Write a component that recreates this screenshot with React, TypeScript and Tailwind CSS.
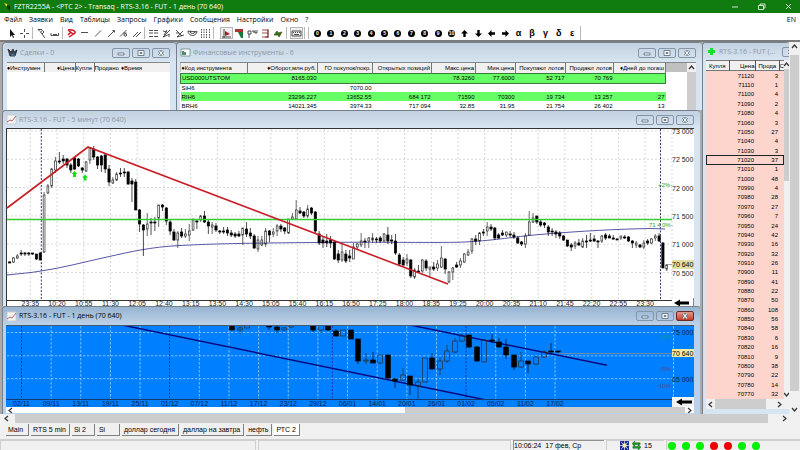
import type { ReactNode } from 'react';
import clsx from 'clsx';

type Candle = [high: number, low: number, top: number, bottom: number, filled?: 1];

const menus = ['Файл', 'Заявки', 'Вид', 'Таблицы', 'Запросы', 'Графики', 'Сообщения', 'Настройки', 'Окно', '?'];

const minuteTimes = [
  '23:35', '10:20', '10:55', '11:30', '12:05', '12:40', '13:15', '13:50', '14:30', '15:05', '15:40', '16:15',
  '16:50', '17:25', '18:00', '18:35', '19:25', '20:00', '20:35', '21:10', '21:45', '22:20', '22:55', '23:30',
];

const minutePrices = ['73 000', '72 500', '72 000', '71 500', '71 000', '70 500'];

const minuteCandles: Candle[] = [
  [261, 263, 262, 263, 1], [257, 263, 258, 262], [254, 259, 256, 258], [250, 256, 253, 254, 1], [252, 256, 253, 254, 1],
  [252, 256, 253, 254, 1], [253, 255, 253, 254, 1], [254, 260, 254, 259, 1], [252, 260, 253, 260, 1], [192, 253, 195, 252],
  [184, 194, 186, 193], [168, 188, 169, 186], [157, 173, 161, 170], [152, 164, 161, 162, 1], [155, 164, 159, 161, 1],
  [158, 168, 159, 165, 1], [163, 173, 165, 170, 1], [157, 170, 158, 169, 1], [158, 167, 159, 166, 1], [167, 173, 168, 170, 1],
  [161, 172, 162, 171], [147, 164, 148, 160], [146, 160, 149, 157, 1], [156, 169, 157, 165, 1], [155, 172, 156, 165, 1],
  [154, 173, 155, 169, 1], [165, 186, 169, 182, 1], [177, 184, 180, 183], [172, 181, 174, 180], [168, 177, 173, 174, 1],
  [168, 177, 172, 173, 1], [171, 185, 172, 184, 1], [178, 202, 181, 184, 1], [179, 210, 182, 210, 1], [209, 232, 210, 224, 1],
  [224, 256, 225, 230, 1], [213, 236, 224, 229], [218, 235, 222, 223, 1], [217, 231, 222, 223, 1], [205, 227, 205, 218],
  [204, 211, 205, 207, 1], [207, 225, 208, 221, 1], [220, 235, 222, 231, 1], [229, 241, 232, 240, 1], [231, 248, 233, 240],
  [228, 238, 232, 236, 1], [229, 238, 234, 236], [224, 241, 231, 235], [218, 231, 220, 230], [219, 229, 221, 222, 1],
  [215, 222, 216, 220], [211, 223, 216, 222, 1], [219, 234, 222, 226, 1], [222, 234, 225, 227], [223, 232, 226, 230, 1],
  [230, 234, 231, 232, 1], [227, 234, 231, 232, 1], [227, 236, 230, 233, 1], [230, 237, 233, 235, 1], [232, 238, 234, 236, 1],
  [231, 237, 234, 236, 1], [228, 245, 228, 235], [222, 237, 229, 234, 1], [228, 239, 233, 236, 1], [234, 249, 236, 248, 1],
  [236, 252, 240, 249], [236, 246, 240, 245], [228, 247, 231, 244], [230, 242, 231, 235, 1], [228, 237, 232, 234],
  [224, 236, 226, 231], [224, 232, 226, 229, 1], [227, 234, 228, 231, 1], [219, 234, 219, 233], [213, 220, 217, 219],
  [200, 219, 210, 219], [207, 214, 211, 213, 1], [211, 218, 212, 216, 1], [205, 218, 209, 216], [207, 215, 208, 213, 1],
  [211, 234, 212, 231, 1], [231, 245, 234, 243, 1], [236, 248, 240, 243, 1], [234, 247, 241, 243, 1], [236, 248, 240, 243, 1],
  [240, 260, 242, 259, 1], [250, 263, 254, 260, 1], [243, 262, 252, 260], [250, 263, 254, 261, 1], [250, 262, 256, 258, 1],
  [243, 259, 247, 259], [243, 249, 244, 247], [233, 247, 241, 245], [238, 248, 241, 242, 1], [237, 248, 238, 241],
  [233, 243, 238, 240], [237, 243, 239, 240, 1], [236, 243, 238, 241, 1], [233, 242, 234, 241], [227, 244, 235, 241, 1],
  [235, 244, 240, 241, 1], [234, 255, 241, 253, 1], [253, 266, 255, 264, 1], [257, 266, 260, 265, 1], [254, 266, 259, 263],
  [259, 278, 260, 276, 1], [268, 279, 270, 277], [265, 273, 271, 272, 1], [259, 273, 260, 271], [259, 271, 261, 268, 1],
  [267, 277, 267, 269], [262, 271, 267, 269, 1], [260, 271, 264, 268], [246, 268, 258, 267], [258, 274, 259, 269, 1],
  [271, 283, 272, 282], [267, 280, 268, 272], [262, 268, 265, 267, 1], [258, 268, 261, 265], [253, 263, 254, 262],
  [249, 256, 252, 255], [238, 254, 239, 251], [235, 245, 239, 241, 1], [232, 245, 233, 241], [229, 236, 232, 233, 1],
  [222, 236, 227, 231], [224, 231, 227, 229, 1], [227, 240, 228, 238, 1], [233, 239, 235, 238, 1], [230, 236, 233, 235, 1],
  [232, 237, 232, 235], [231, 237, 234, 235, 1], [232, 239, 235, 237, 1], [236, 244, 238, 243, 1], [241, 246, 242, 244, 1],
  [233, 248, 236, 244], [211, 236, 222, 235], [213, 223, 218, 222], [216, 224, 216, 222, 1], [219, 227, 222, 225, 1],
  [222, 228, 223, 225, 1], [225, 236, 227, 232, 1], [228, 236, 231, 232, 1], [230, 238, 232, 234, 1], [231, 239, 233, 236, 1],
  [235, 241, 236, 240, 1], [240, 247, 240, 246, 1], [243, 251, 245, 247, 1], [241, 249, 243, 246], [239, 246, 243, 245, 1],
  [238, 248, 241, 247], [235, 248, 241, 242, 1], [233, 242, 240, 241, 1], [235, 242, 239, 241, 1], [240, 248, 241, 242, 1],
  [235, 243, 236, 241], [233, 240, 235, 238, 1], [234, 238, 236, 238, 1], [235, 240, 238, 239, 1], [238, 240, 239, 240, 1],
  [236, 240, 236, 238], [235, 239, 237, 238, 1], [236, 242, 237, 241, 1], [240, 248, 241, 243, 1], [241, 248, 243, 245],
  [244, 248, 245, 247, 1], [240, 249, 243, 247], [239, 245, 241, 243, 1], [238, 244, 239, 243], [234, 241, 236, 238],
  [233, 242, 236, 241, 1], [242, 268, 243, 268, 1], [264, 271, 265, 269],
];

const dayLabels = [
  '02/11', '09/11', '13/11', '19/11', '25/11', '01/12', '07/12', '11/12', '17/12', '23/12',
  '29/12', '06/01', '14/01', '20/01', '26/01', '01/02', '05/02', '11/02', '17/02',
];

const dayCandles: { x: number; c: Candle }[] = [
  { x: 232, c: [326, 330, 326, 330, 1] }, { x: 240, c: [326, 334, 328, 330] }, { x: 247, c: [326, 328, 325, 328] },
  { x: 269, c: [326, 330, 326, 327, 1] }, { x: 277, c: [326, 333, 327, 330, 1] }, { x: 284, c: [327, 331, 328, 330] },
  { x: 291, c: [325, 328, 325, 327] }, { x: 313, c: [326, 332, 326, 330, 1] }, { x: 321, c: [326, 333, 325, 330] },
  { x: 328, c: [326, 331, 326, 330, 1] }, { x: 336, c: [329, 337, 331, 336, 1] }, { x: 343, c: [330, 336, 330, 336] },
  { x: 351, c: [330, 339, 330, 339, 1] }, { x: 358, c: [339, 364, 339, 361, 1] }, { x: 366, c: [353, 364, 360, 361] },
  { x: 373, c: [352, 363, 360, 363, 1] }, { x: 380, c: [355, 364, 355, 363] }, { x: 388, c: [355, 380, 355, 378, 1] },
  { x: 395, c: [378, 388, 379, 381, 1] }, { x: 403, c: [368, 381, 375, 380] }, { x: 410, c: [376, 395, 376, 385, 1] },
  { x: 418, c: [379, 400, 382, 386] }, { x: 425, c: [358, 382, 358, 382] }, { x: 432, c: [353, 369, 358, 369, 1] },
  { x: 440, c: [357, 375, 361, 369] }, { x: 447, c: [345, 363, 351, 361] }, { x: 455, c: [338, 353, 341, 352] },
  { x: 462, c: [334, 342, 336, 341] }, { x: 469, c: [335, 348, 335, 347, 1] }, { x: 477, c: [346, 362, 347, 361, 1] },
  { x: 484, c: [340, 362, 340, 362] }, { x: 492, c: [334, 343, 340, 341, 1] }, { x: 499, c: [338, 348, 342, 347, 1] },
  { x: 506, c: [339, 359, 347, 355, 1] }, { x: 514, c: [355, 370, 355, 367, 1] }, { x: 521, c: [352, 368, 361, 367] },
  { x: 528, c: [361, 373, 361, 364, 1] }, { x: 536, c: [356, 365, 357, 364] }, { x: 544, c: [350, 358, 352, 357] },
  { x: 551, c: [343, 354, 351, 352, 1] }, { x: 558, c: [351, 353, 351, 352, 1] },
];

const instruments = [
  ['USD000UTSTOM', '8165.030', '', '', '78.3260', '77.6000', '52 717', '70 769', ''],
  ['SiH6', '', '7070.00', '', '', '', '', '', ''],
  ['RIH6', '23296.227', '13652.55', '684 172', '71590', '70300', '19 734', '13 257', '27'],
  ['BRH6', '14021.345', '3974.33', '717 094', '32.85', '31.95', '21 754', '26 402', '13'],
];

const instrumentHeads = [
  '♦Код инструмента', '♦Оборот,млн.руб.', 'ГО покупок/покр.', 'Открытых позиций', 'Макс.цена',
  'Мин.цена', 'Покупают лотов', 'Продают лотов', '♦Дней до погаш',
];

const orders = [
  [71120, 3], [71110, 1], [71100, 4], [71090, 2], [71080, 4], [71060, 3], [71050, 27], [71040, 4], [71030, 3],
  [71020, 37], [71010, 1], [71000, 48], [70990, 4], [70980, 28], [70970, 27], [70960, 7], [70950, 24], [70940, 42],
  [70930, 16], [70920, 32], [70910, 26], [70900, 11], [70890, 41], [70880, 22], [70870, 50], [70860, 108], [70850, 56],
  [70840, 58], [70830, 6], [70820, 16], [70810, 9], [70800, 38], [70790, 22], [70780, 14], [70770, 32],
];

const tabs = ['Main', 'RTS 5 min', 'Si 2', 'Si', 'доллар сегодня', 'даллар на завтра', 'нефть', 'РТС 2'];

const lights = ['bg-[#00f000]', 'bg-[#00f000]', 'bg-[#00f000]', 'bg-[#f00000]', 'bg-[#f00000]', 'bg-[#00f000]', 'bg-[#00f000]'];

function Icon({ children, className }: { children: ReactNode; className?: string }) {
  return (
    <svg viewBox="0 0 11 11" className={clsx('block size-[11px] shrink-0', className)} fill="none" stroke="#222" strokeWidth="0.8">
      {children}
    </svg>
  );
}

function ToolButton({ label, children, pressed }: { label: string; children: ReactNode; pressed?: boolean }) {
  return (
    <button
      aria-label={label}
      className={clsx(
        'flex h-3 w-[13px] shrink-0 items-center justify-center',
        pressed && 'border border-[#b5b5b5] bg-[#f0f0f0]',
      )}
    >
      {children}
    </button>
  );
}

function Separator() {
  return <span className="mr-[2px] ml-[1px] h-3 w-px shrink-0 bg-[#b8b8b8]" />;
}

function Toolbar() {
  return (
    <div className="flex h-[14px] shrink-0 items-center bg-white pl-[5px]">
      <ToolButton label="Курсор">
        <Icon><path d="M4 1v8l2-2 1 3 1-.5L7 7h2z" fill="#111" stroke="none" /></Icon>
      </ToolButton>
      <ToolButton label="Перекрестие">
        <Icon><path d="M5.500 1v3M5.500 7v3M1 5.500h3M7 5.500h3" /></Icon>
      </ToolButton>
      <Separator />
      <ToolButton label="Лупа">
        <Icon><path d="M2 1.500h4M2 1.500l2 2M6 6l3 4M6.500 2.500l1.500 1.500-2 2L4.500 4z" /></Icon>
      </ToolButton>
      <ToolButton label="Линейка">
        <Icon><path d="M2 5v2.500h7.500V5M4 6.500h4" /></Icon>
      </ToolButton>
      <Separator />
      <ToolButton label="Удалить линию">
        <Icon><path d="M2 2c4-1 8 1 7 3L3 9M2 2l5 4M2 7l3-3" stroke="#d01020" strokeWidth="1.500" /></Icon>
      </ToolButton>
      <ToolButton label="Горизонталь"><Icon><path d="M2 4.500h7" /></Icon></ToolButton>
      <ToolButton label="Отрезок"><Icon><path d="M3 8.500l6-6" /></Icon></ToolButton>
      <ToolButton label="Луч"><Icon><path d="M3 9l6-6M7.500 2.500h2V4.500" /></Icon></ToolButton>
      <ToolButton label="Угол"><Icon><path d="M2 8.500l6.500-6.500M6 7a1.300 1.300 0 1 0 2.600 0 1.300 1.300 0 1 0-2.600 0M5.500 5h3" /></Icon></ToolButton>
      <ToolButton label="Канал"><Icon><path d="M2 9l5-5M5 9l5-5" /></Icon></ToolButton>
      <Separator />
      <ToolButton label="Уровни"><Icon><path d="M1 2.500h9M1 5h9M1 8.500h9" strokeDasharray="4 1" /></Icon></ToolButton>
      <ToolButton label="Веер"><Icon><path d="M2 9l7-7M2 9l7-3M2 3l4 1M6 2L3 7M7 8h2" /></Icon></ToolButton>
      <ToolButton label="Лучи"><Icon><path d="M3 9l6-6M3 9l7-2M2 2l6 6M2 5h3" /></Icon></ToolButton>
      <ToolButton label="Дуги"><Icon><path d="M1 3a4.500 4.500 0 0 0 9 0M3 3a2.500 2.500 0 0 0 5 0M1 3l9 1" /></Icon></ToolButton>
      <ToolButton label="Зоны"><Icon><path d="M1.500 1v9M4 1v9M6.500 1v9M9.500 1v9" strokeDasharray="1.500 1" /></Icon></ToolButton>
      <Separator />
      <span className="w-[4px]" />
      <ToolButton label="Оси" pressed><Icon><path d="M3 1v9M1 9h9" /><path d="M4 3l5 3-5 2z" fill="#a02020" stroke="none" /></Icon></ToolButton>
      <ToolButton label="Цвет"><Icon><path d="M1 1h8v3H1z" fill="#b03030" stroke="none" /><path d="M4 4h5v6H7z" fill="#187838" stroke="none" /></Icon></ToolButton>
      <ToolButton label="Параметры"><Icon><path d="M1 3h3v3H1zM5 3h2v2M8 2v3h2V2M2 6v4" /></Icon></ToolButton>
      <ToolButton label="Сетка"><Icon><path d="M2 2h6v7H2M2 5h6M8 1v9M5 9h3" stroke="#802020" /></Icon></ToolButton>
      <ToolButton label="Обновить"><Icon><path d="M1 7l3-4 1 2 4-1-3 5-1-2z" fill="#108020" stroke="#6a4a10" /></Icon></ToolButton>
      <Separator />
      <span className="w-px" />
      <ToolButton label="Клавиатура" pressed><Icon><path d="M1 3h9v5H1zM3 6.500h5" /><path d="M2 4.500h7" strokeDasharray="1 1" /></Icon></ToolButton>
      <Separator />
      <Separator />
      <div className="ml-[3px] flex w-[262px] items-center justify-between">
        {['0', '1', '2', '3', '4', '5', '6', '7', '8', '9', '10'].map((n) => (
          <button key={n} className="flex size-[7px] items-center justify-center rounded-full bg-black text-[5px] leading-none font-bold text-white">
            {n}
          </button>
        ))}
        {[0, 180, 270, 90].map((deg) => (
          <button key={deg} aria-label={`Стрелка ${deg}`}>
            <svg viewBox="0 0 7 7" className="block size-[7px]" style={{ rotate: `${deg}deg` }}>
              <path d="M3.500 0L7 3.500H4.700V7H2.300V3.500H0z" />
            </svg>
          </button>
        ))}
        {['α', 'β', 'γ', 'δ', 'ε'].map((g) => (
          <button key={g} className="w-[7px] text-[9px] leading-none font-bold">{g}</button>
        ))}
      </div>
      <span className="ml-[4px] h-full w-px bg-[#b8b8b8]" />
    </div>
  );
}

function ControlButtons({ active }: { active?: boolean }) {
  const base = 'flex h-[10px] w-[18px] items-center justify-center rounded-[2px] border border-[#8495a8]';
  return (
    <div className="flex gap-[2px]">
      <button aria-label="Свернуть" className={base}>
        <svg viewBox="0 0 8 6" className="block h-[6px] w-2"><path d="M1 3h6v2H1z" fill="#fff" stroke="#556577" strokeWidth="0.8" /></svg>
      </button>
      <button aria-label="Развернуть" className={base}>
        <svg viewBox="0 0 8 6" className="block h-[6px] w-2"><path d="M1 .5h6v5H1zM3 2.500h2v1H3z" fill="#fff" stroke="#556577" strokeWidth="0.8" /></svg>
      </button>
      <CloseButton active={active} />
    </div>
  );
}

function CloseButton({ active }: { active?: boolean }) {
  return (
    <button
      aria-label="Закрыть"
      className={clsx(
        'flex h-[10px] w-[18px] shrink-0 items-center justify-center rounded-[2px] border',
        active ? 'border-[#6d2a22] bg-linear-to-b from-[#e09a8c] to-[#c33a22]' : 'border-[#8495a8]',
      )}
    >
      <svg viewBox="0 0 8 6" className="block h-[6px] w-2">
        <path d="M2 .5l4 5M6 .5l-4 5" stroke="#556577" strokeWidth="2.400" />
        <path d="M2 .5l4 5M6 .5l-4 5" stroke="#fff" strokeWidth="1.200" />
      </svg>
    </button>
  );
}

interface MdiWindowProps {
  title: string;
  icon: ReactNode;
  active?: boolean;
  className?: string;
  barClass?: string;
  controls?: ReactNode;
  children: ReactNode;
}

function MdiWindow({ title, icon, active, className, barClass = 'h-[18px]', controls, children }: MdiWindowProps) {
  return (
    <section
      className={clsx(
        'flex min-w-0 flex-col rounded-t-[4px] border-t border-l border-[#75808c] pr-[6px] pl-[3px]',
        active ? 'bg-[#b9d1ea]' : 'bg-[#d7e4f2]',
        className,
      )}
    >
      <div
        className={clsx(
          '-mr-[6px] -ml-[3px] flex shrink-0 items-center gap-[2px] rounded-t-[4px] bg-linear-to-b pr-[6px] pl-[3px]',
          active ? 'from-[#98b4d0] to-[#bcd2e9]' : 'from-[#c2d1e0] to-[#d7e4f2]',
          barClass,
        )}
      >
        {icon}
        <h2 className={clsx("grow font-['Open_Sans',sans-serif] text-[7px] leading-[10px] whitespace-nowrap", active ? 'text-black' : 'text-[#8e98a4]')}>{title}</h2>
        {controls ?? <ControlButtons active={active} />}
      </div>
      {children}
    </section>
  );
}

const chartIcon = (
  <Icon>
    <path d="M1 1h9v9H1z" fill="#f4f4f4" stroke="#c8c8c8" />
    <path d="M1 8l3-2 2 1 4-5" stroke="#b04040" />
  </Icon>
);

function Candles({ x, c, half }: { x: number; c: Candle; half: number }) {
  const [high, low, top, bottom, filled] = c;
  return (
    <g stroke={filled ? '#000' : '#2a2a2a'} strokeWidth="0.7">
      <path d={`M${x} ${high}V${top}M${x} ${bottom}V${low}`} />
      <rect x={x - half} y={top} width={half * 2} height={Math.max(bottom - top, 1)} fill={filled ? '#000' : 'none'} />
    </g>
  );
}

function MinuteChart() {
  return (
    <svg viewBox="6 128 688 178" className="block w-full bg-white font-['Liberation_Sans',sans-serif]" role="img" aria-label="RTS-3.16, 5 минут">
      <g stroke="#cfcfcf" strokeWidth="0.8" strokeDasharray="2 2">
        {minuteTimes.map((t, i) => <path key={t} d={`M${30.3 + i * 26.73} 129V300`} />)}
        {minutePrices.map((p, i) => <path key={p} d={`M7 ${131 + i * 28.3}H672`} />)}
        <path d="M672 129V300" />
      </g>
      <path d="M41.300 129V300M660.500 129V300" stroke="#222258" strokeWidth="0.9" strokeDasharray="2 1.500" />
      <path
        d="M7 275C20 273.500 30 273 41 271C62 268 84 262 107 257C130 252 150 247 180 245.500C220 243.500 250 243 340 242.300C400 242 440 243 465 242C500 240 510 237 540 234.500C580 231 620 229 650 228.500L665 229"
        fill="none" stroke="#5656a8" strokeWidth="1"
      />
      {minuteCandles.map((c, i) => <Candles key={i} x={9.7 + i * 3.82} c={c} half={c[4] ? 1.1 : 0.9} />)}
      <path d="M7 219.500H672" stroke="#35cc35" strokeWidth="1.500" />
      <path d="M7 208L88 147L448 284" fill="none" stroke="#c81e28" strokeWidth="1.600" />
      <path d="M74.500 171l3 3h-1.500v3h-3v-3h-1.500zM85 174.500l3 3h-1.500v3h-3v-3h-1.500z" fill="#18e018" />
      <g fontSize="6" fill="#28a028">
        <text x="658" y="187">+2%-</text>
        <text x="649" y="227">71 4</text>
        <text x="662" y="227">0%-</text>
      </g>
      <path d="M6 128.500H694M6.500 128V306M7 300.500H672" stroke="#333" strokeWidth="1" fill="none" />
      <g fontSize="7" fill="#222">
        {minuteTimes.map((t, i) => <text key={t} x={30.3 + i * 26.73} y="306" textAnchor="middle">{t}</text>)}
        {minutePrices.map((p, i) => <text key={p} x="672" y={134 + i * 28.3}>{p}</text>)}
      </g>
      <path d="M667 264.500h6" stroke="#888" strokeWidth="0.8" />
      <rect x="672" y="260" width="22" height="9" fill="#e2dfa0" />
      <text x="672" y="267" fontSize="7">70 640</text>
      <path d="M674 303l6-3.500v2h9v3h-9v2z" />
      <path d="M693.500 298v8" stroke="#666" strokeWidth="0.8" />
    </svg>
  );
}

function DayChart() {
  return (
    <svg viewBox="6 325 688 82" className="block w-full bg-[#0080ff] font-['Liberation_Sans',sans-serif]" role="img" aria-label="RTS-3.16, 1 день">
      <g stroke="#8cc6ff" strokeWidth="0.9" strokeDasharray="2.500 1.500">
        {dayLabels.map((d, i) => !d.startsWith('01/') && i > 0 && <path key={d} d={`M${21.5 + i * 29.64} 326V399`} />)}
        <path d="M7 332.500H673M7 355.800H673M7 378.700H673M673.500 326V399" />
      </g>
      <path d="M21.500 326V399M169.500 326V399M332.300 326V399M466 326V399" stroke="#1c2c9c" strokeWidth="0.9" strokeDasharray="2 1.500" />
      <path d="M558 353.500H673" stroke="#6f8ca8" strokeWidth="1" />
      <path d="M122 325L484 399.500M410 325L607 365.300" stroke="#0a0a80" strokeWidth="1.500" />
      {dayCandles.map(({ x, c }) => <Candles key={x} x={x} c={c} half={2.3} />)}
      <path d="M6 325.500H694" stroke="#46586c" />
      <path d="M6 399.500H673" stroke="#123a70" />
      <g fontSize="7" fill="#06204a">
        {dayLabels.map((d, i) => <text key={d} x={21.5 + i * 29.64} y="406" textAnchor="middle">{d}</text>)}
        <text x="672" y="335">75 000</text>
        <text x="672" y="381.500">65 000</text>
      </g>
      <text x="660" y="339" fontSize="6" fill="#109a8c">+5%</text>
      <text x="660" y="371" fontSize="6" fill="#6a3f80">-5%</text>
      <text x="657" y="388" fontSize="6" fill="#6a3f80">-10%</text>
      <rect x="672" y="349" width="22" height="8" fill="#f0eca0" />
      <text x="672" y="355.500" fontSize="7">70 640</text>
      <rect x="672" y="397" width="22" height="10" fill="#f4f4f4" />
      <path d="M676 402l6-3.500v2h10v3h-10v2z" />
    </svg>
  );
}

const tableText = 'text-[6px] leading-[8px]';

function DealsTable() {
  return (
    <div className="grow overflow-hidden border-t border-[#888] bg-white">
      <table className={clsx('w-full table-fixed border-collapse whitespace-nowrap', tableText)}>
        <colgroup>
          <col className="w-[37px]" /><col className="w-[31px]" /><col className="w-[19px]" /><col className="w-[27px]" /><col />
        </colgroup>
        <thead>
          <tr className="h-[9px] bg-[#f0f0f0]">
            <th className="border-r border-[#777] p-0 text-left font-normal">♦Инструмен</th>
            <th className="border-r border-[#777] p-0 text-right font-normal">♦Цена</th>
            <th className="border-r border-[#777] p-0 text-left font-normal">Купле</th>
            <th className="p-0 text-left font-normal">Продано</th>
            <th className="p-0 text-left font-normal">♦Время</th>
          </tr>
        </thead>
      </table>
    </div>
  );
}

function InstrumentsTable() {
  return (
    <div className="flex grow overflow-hidden border-t border-[#888] bg-white">
      <div className="grow bg-linear-to-b from-[#c0c0c0] from-[9px] to-white to-[9px]">
        <table className={clsx('w-[486px] table-fixed border-collapse whitespace-nowrap', tableText)}>
          <colgroup>
            <col className="w-[67px]" /><col className="w-[70px]" /><col className="w-[55px]" /><col className="w-[59px]" />
            <col className="w-[44px]" /><col className="w-[40px]" /><col className="w-[50px]" /><col className="w-[48px]" /><col />
          </colgroup>
          <thead>
            <tr className="h-[10px] bg-[#f0f0f0]">
              {instrumentHeads.map((h, i) => (
                <th key={h} className={clsx('border-r border-[#777] px-px py-0 font-normal', i === 0 ? 'text-left' : 'text-right')}>{h}</th>
              ))}
            </tr>
          </thead>
          <tbody>
            {instruments.map((row, r) => (
              <tr key={row[0]} className={clsx(r % 2 === 0 && 'bg-[#66ff66]', r === 0 ? 'h-[10px] border border-[#3a7a3a]' : 'h-[9px]')}>
                {row.map((v, i) => (
                  <td key={i} className={clsx('px-px py-0', i > 0 && 'text-right')}>{v}</td>
                ))}
              </tr>
            ))}
          </tbody>
        </table>
      </div>
      <div className="flex w-[9px] shrink-0 flex-col items-center bg-[#f0f0f0]">
        <Chevron dir="up" />
        <span className="w-full grow bg-[#cdcdcd]" />
      </div>
    </div>
  );
}

function Chevron({ dir }: { dir: 'up' | 'down' | 'left' | 'right' }) {
  const d = { up: 'M3 7l2.500-3L8 7', down: 'M3 4l2.500 3L8 4', left: 'M7 3L4 5.500 7 8', right: 'M4 3l3 2.500L4 8' }[dir];
  return <Icon className="m-[-1px]"><path d={d} stroke="#333" strokeWidth="1.200" /></Icon>;
}

function OrderBook() {
  return (
    <>
      <div className="flex grow">
        <div className="flex grow flex-col bg-[#fdd5cc]">
          <table className={clsx('h-full w-full grow table-fixed border-collapse', tableText)}>
            <colgroup>
              <col className="w-[23px]" /><col className="w-[26px]" /><col className="w-[24px]" /><col />
            </colgroup>
            <thead>
              <tr className="h-[10px] border-y border-[#777] bg-[#f0f0f0]">
                <th className="border-r border-[#555] p-0 text-center font-normal">Купля</th>
                <th className="border-r border-[#555] p-0 text-right font-normal">Цена</th>
                <th className="border-r border-[#555] p-0 pl-[3px] text-left font-normal">Прода</th>
                <th className="p-0 text-left font-normal">С</th>
              </tr>
            </thead>
            <tbody>
              {orders.map(([price, lots]) => (
                <tr key={price} className={clsx(price === 71020 && 'outline -outline-offset-1 outline-[#222]')}>
                  <td />
                  <td className="p-0 pr-px text-right">{price}</td>
                  <td className="p-0 pr-px text-right">{lots}</td>
                  <td />
                </tr>
              ))}
            </tbody>
          </table>
        </div>
        <div className="flex w-[5px] shrink-0 flex-col items-center overflow-hidden bg-[#f0f0f0]">
          <Chevron dir="up" />
          <span className="h-[112px] w-full bg-[#cdcdcd]" />
          <span className="grow" />
          <Chevron dir="down" />
        </div>
      </div>
      <div className="flex h-[10px] shrink-0 items-center bg-[#f0f0f0]">
        <Chevron dir="left" />
        <span className="h-full w-[51px] bg-[#cdcdcd]" />
        <span className="w-[9px]" />
        <Chevron dir="right" />
      </div>
      <div className="h-[5px] shrink-0" />
    </>
  );
}

function StatusBar() {
  return (
    <footer className="flex h-[10px] shrink-0 items-stretch gap-[2px] bg-[#f0f0f0] text-[7px] leading-[9px]">
      <div className="w-[256px] border border-b-0 border-[#d0d0d0]" />
      <div className="grow border border-b-0 border-[#d0d0d0]" />
      <div className="flex w-[91px] gap-[4px] border-t border-l border-[#909090]">
        <span>10:06:24</span>
        <span>17 фев, Ср</span>
      </div>
      <div className="flex w-[58px] items-center gap-[3px] border-t border-l border-[#d0d0d0] pl-[13px]">
        <svg viewBox="0 0 10 10" className="block size-[9px]">
          <path d="M0 0h10v10H0z" fill="#1a2a9a" />
          <path d="M0 5h10M5 0v10M1 1l8 8M9 1L1 9" stroke="#dfe4f0" strokeWidth="0.8" />
          <circle cx="5" cy="5" r="2.400" fill="#f2f0a0" />
        </svg>
        <svg viewBox="0 0 10 10" className="block size-[9px]">
          <path d="M0 3l3-3v2h6v2H3v2zM10 7l-3 3V8H1V6h6V4z" fill="#18a028" stroke="#0a4a10" strokeWidth="0.5" />
        </svg>
        <span>15</span>
      </div>
      <div className="flex w-[134px] items-center gap-[6px] border-t border-l border-[#d0d0d0] pl-px">
        {lights.map((color, i) => (
          <span key={i} className={clsx('size-2 rounded-full', color)} />
        ))}
      </div>
    </footer>
  );
}

export default function App() {
  return (
    <div className="flex min-h-screen flex-col overflow-hidden bg-[#f0f0f0] font-['Liberation_Sans',sans-serif] text-[7px] text-black">
      {/* Title bar */}
      <header className="flex h-[13px] shrink-0 items-center bg-[#107c10] pl-[3px] font-['Open_Sans',sans-serif] text-white">
        <svg viewBox="0 0 9 9" className="mr-[2px] block size-[9px]">
          <path d="M1 1l3 1 1 3-2-1z" fill="#f0d020" />
          <path d="M4 3l3 1v5L4 6z" fill="#083808" />
        </svg>
        <h1 className="grow text-[7px] leading-[10px]">FZTR2255A - &lt;РТС 2&gt; - Transaq - RTS-3.16 - FUT - 1 день (70 640)</h1>
        <div className="flex gap-[16px] pr-[6px]">
          <button aria-label="Свернуть окно"><Icon><path d="M3 6h6" stroke="#fff" /></Icon></button>
          <button aria-label="Восстановить окно"><Icon><path d="M2.500 4.500h5v4h-5zM4 4.500V3h5v4H7.500" stroke="#fff" /></Icon></button>
          <button aria-label="Закрыть окно"><Icon><path d="M3 3l5 5M8 3L3 8" stroke="#fff" /></Icon></button>
        </div>
      </header>

      {/* Menu */}
      <nav className="flex h-[13px] shrink-0 items-center gap-[7px] bg-white pr-[4px] pl-[4px] font-['Open_Sans',sans-serif] leading-[10px]">
        {menus.map((m) => <button key={m}>{m}</button>)}
        <span className="ml-auto">EN</span>
      </nav>

      <Toolbar />

      {/* Workspace */}
      <main className="flex grow border-t-2 border-[#7c7c7c] bg-[#ababab]">
        <div className="flex min-w-0 grow flex-col pl-[2px]">
          <div className="flex h-[68px] shrink-0">
            <MdiWindow
              title="Сделки - 0"
              className="w-[174px] shrink-0 pl-[4px]"
              barClass="h-[19px]"
              icon={<Icon><path d="M1 2l3 3 2-3 1 3 3-2-2 6H3z" fill="#3a4a5a" /><path d="M4 8h4" stroke="#60a0d0" /></Icon>}
            >
              <DealsTable />
            </MdiWindow>
            <MdiWindow
              title="Финансовые инструменты - 6"
              className="grow"
              barClass="h-[19px]"
              icon={<Icon><path d="M1 2h9v7H1z" fill="#fff" stroke="#688" /><path d="M3 4v4M5 5v3" stroke="#186838" strokeWidth="1.500" /></Icon>}
            >
              <InstrumentsTable />
            </MdiWindow>
          </div>
          <MdiWindow title="RTS-3.16 - FUT - 5 минут (70 640)" className="mr-[2px] shrink-0" barClass="h-[17px]" icon={chartIcon}>
            <MinuteChart />
          </MdiWindow>
          <MdiWindow title="RTS-3.16 - FUT - 1 день (70 640)" active className="mr-[2px] grow" icon={chartIcon}>
            <DayChart />
            <div className="flex h-[6px] items-center overflow-hidden bg-white">
              <Chevron dir="left" />
              <span className="grow" />
              <span className="h-full w-[280px] bg-[#cdcdcd]" />
              <Chevron dir="right" />
            </div>
          </MdiWindow>
        </div>
        <MdiWindow
          title="RTS-3.16 - FUT (..."
          className="w-[87px] shrink-0 pr-0!"
          barClass="h-[17px]"
          icon={<Icon><path d="M4 2h3v2h2v3H7v2H4V7H2V4h2z" fill="#18e030" stroke="none" /></Icon>}
          controls={<div className="-mr-[6px] flex w-[13px] overflow-hidden"><CloseButton /></div>}
        >
          <OrderBook />
        </MdiWindow>
        <div className="flex w-[11px] shrink-0 flex-col items-center bg-[#f0f0f0]">
          <Chevron dir="up" />
          <span className="my-[4px] w-[9px] grow bg-[#cdcdcd]" />
          <span className="h-[10px]" />
          <Chevron dir="down" />
        </div>
      </main>

      {/* Horizontal scroll */}
      <div className="flex h-[9px] shrink-0 items-center pr-[11px] pl-[2px]">
        <Chevron dir="left" />
        <span className="ml-[4px] h-full grow bg-[#cdcdcd]" />
        <span className="w-[12px]" />
        <Chevron dir="right" />
      </div>

      {/* Tabs */}
      <div className="flex h-[17px] shrink-0 items-start border-b border-[#d0d0d0] pt-[1px] pl-[6px]">
        {tabs.map((tab) => (
          <button
            key={tab}
            className={clsx(
              'mr-[2px] h-[12px] min-w-[23px] border-r border-b border-[#808080] pr-[3px] pl-[2px] text-left leading-[10px] whitespace-nowrap',
              tab === 'РТС 2' ? 'bg-white' : 'bg-[#f0f0f0]',
            )}
          >
            {tab}
          </button>
        ))}
      </div>

      <StatusBar />
    </div>
  );
}
